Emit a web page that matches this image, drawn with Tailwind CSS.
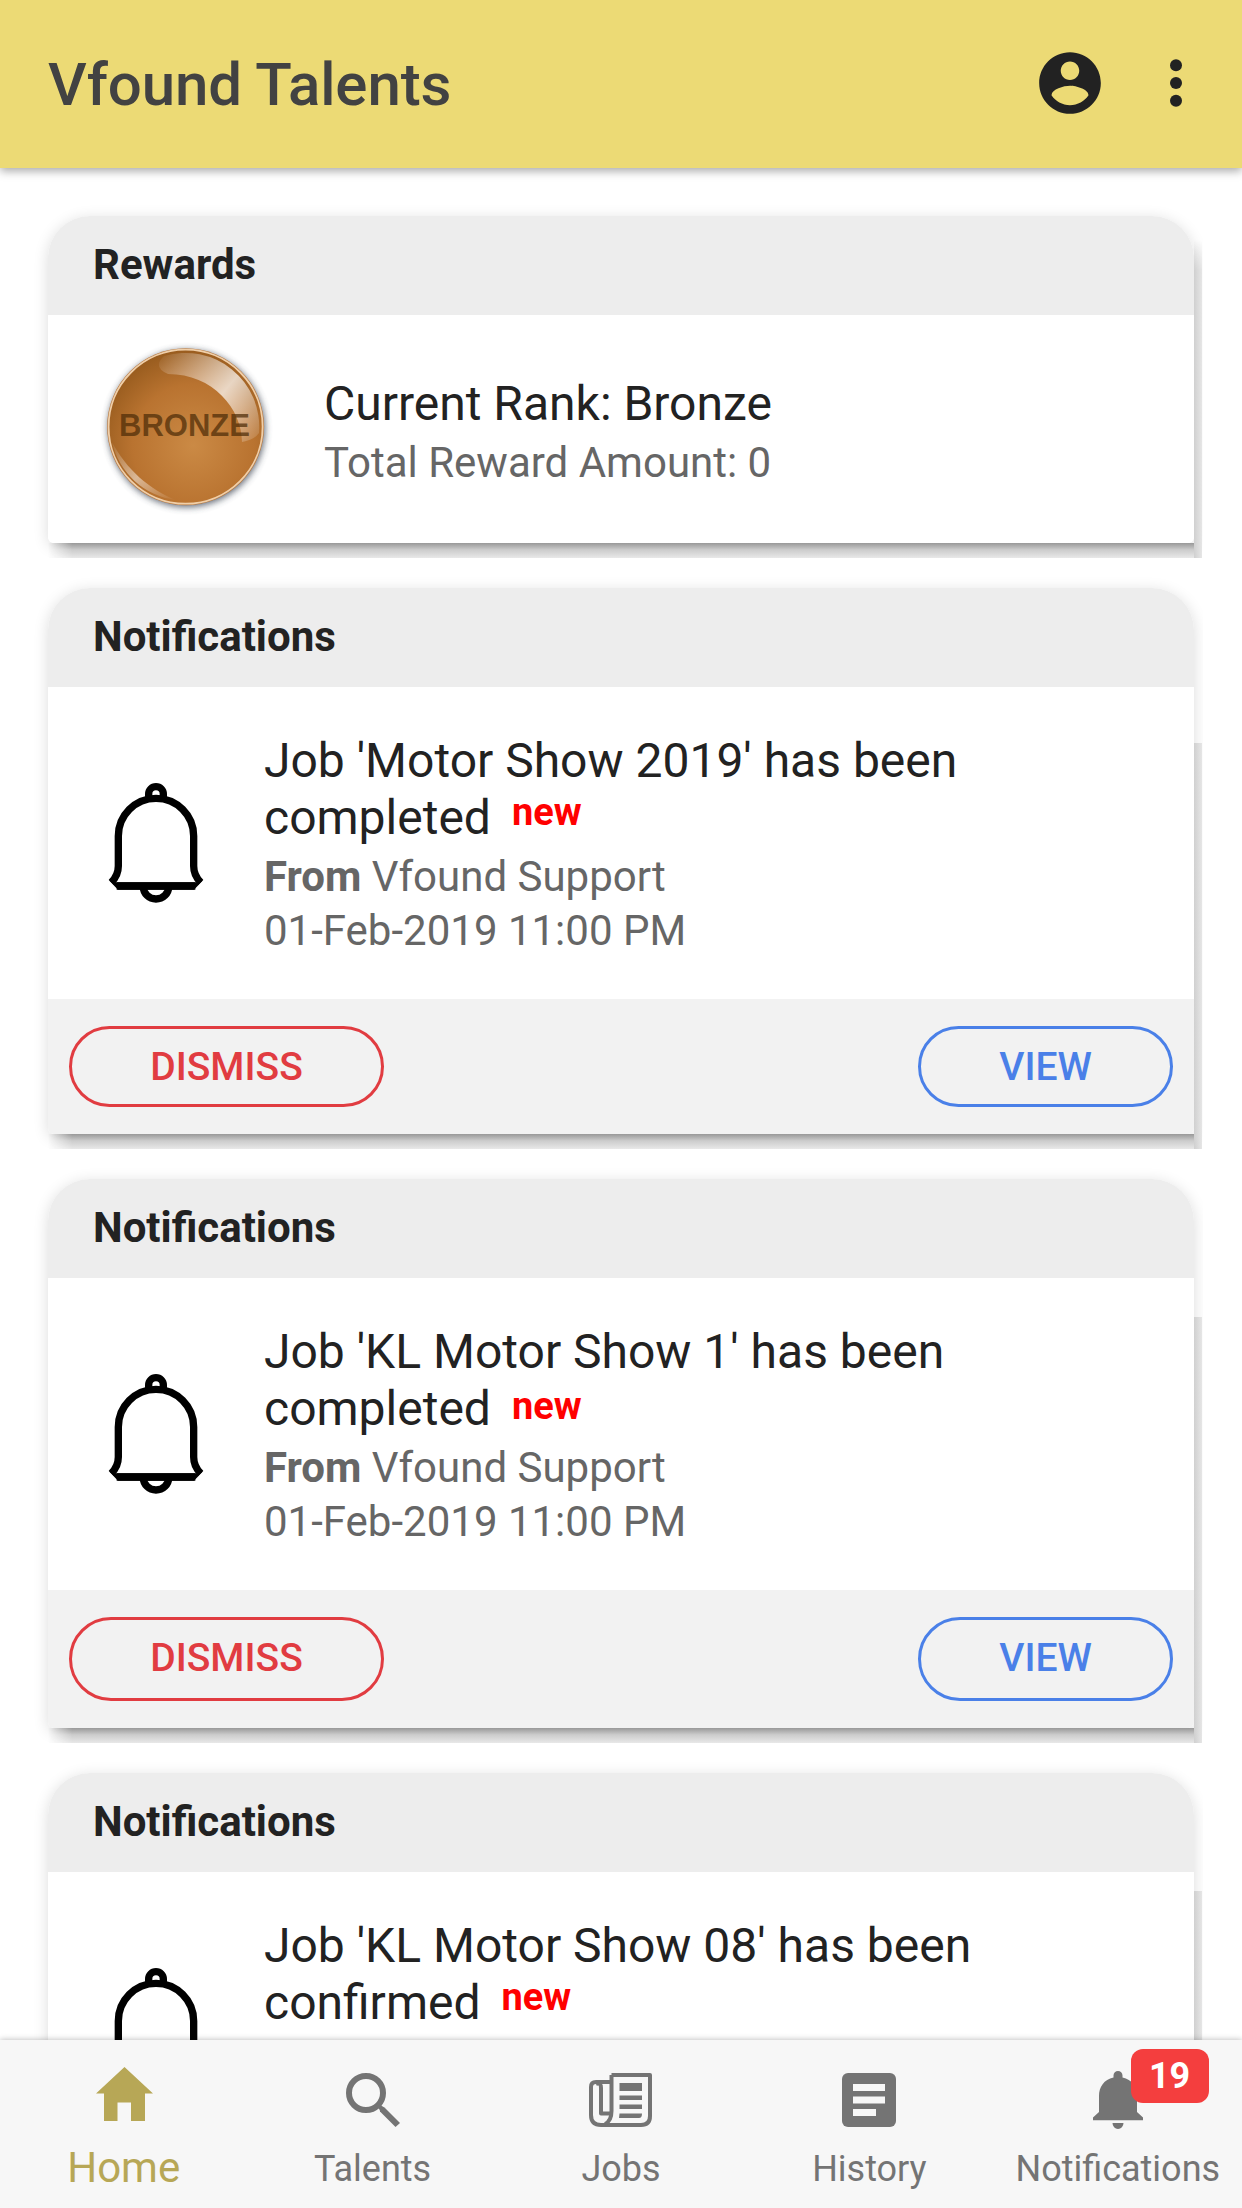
<!DOCTYPE html>
<html lang="en">
<head>
<meta charset="utf-8">
<title>Vfound Talents</title>
<script src="https://cdn.jsdelivr.net/npm/@tailwindcss/browser@4"></script>
</head>
<body class="bg-white">
<svg class="hidden">
  <symbol id="bell" viewBox="225 270 306 378">
    <g fill="none" stroke="#000" stroke-width="22">
      <path d="M356 326v-14a22 22 0 0 1 44 0v14"/>
      <path d="M265 580V438A113 113 0 0 1 491 438V580" stroke="none"/>
      <path d="M244 577Q265 556 265 528V438A113 113 0 0 1 491 438V528Q491 556 512 577"/>
      <path d="M260 588H496"/>
      <path d="M340 590a38 37 0 0 0 76 0"/>
    </g>
    <path d="M236 570L264 599H492L520 570L500 577H256Z"/>
  </symbol>
</svg>
<div class="relative flex h-[2208px] w-[1242px] flex-col overflow-hidden bg-white font-[Roboto,sans-serif] text-[#222]">
  <header class="z-10 flex h-[168px] shrink-0 items-center bg-[#ecda75] pl-12 shadow-[0_3px_9px_rgba(0,0,0,0.35)]">
    <h1 class="flex-1 pt-[2px] text-[60px] leading-[72px] font-medium tracking-[-0.1px] text-[#424242]">Vfound Talents</h1>
    <svg class="mr-[31px] mb-[3px] size-[74px]" viewBox="0 0 24 24" fill="#222"><path d="M12 2C6.48 2 2 6.48 2 12s4.48 10 10 10 10-4.480 10-10S17.520 2 12 2zm0 3c1.66 0 3 1.34 3 3s-1.340 3-3 3-3-1.340-3-3 1.340-3 3-3zm0 14.200c-2.500 0-4.710-1.280-6-3.220.030-1.990 4-3.080 6-3.080 1.990 0 5.970 1.090 6 3.080-1.290 1.940-3.500 3.220-6 3.220z"/></svg>
    <svg class="mr-[28px] mb-[3px] h-[72px] w-[76px]" viewBox="0 0 76 72" fill="#222"><circle cx="38" cy="18.300" r="6"/><circle cx="38" cy="36" r="6"/><circle cx="38" cy="53.700" r="6"/></svg>
  </header>

  <main class="flex flex-1 flex-col gap-[45px] px-12 pt-12">
    <section class="relative h-[327px] shrink-0 rounded-t-[42px] rounded-b-[6px] bg-white shadow-[0_3px_15px_rgba(0,0,0,0.14)] [clip-path:inset(-15px_-9px_-15px_-15px)]">
      <div class="absolute top-[24px] -bottom-[15px] left-full w-[8px] bg-linear-to-r from-[#d0d0d0] to-[#e6e6e6] [mask-image:linear-gradient(to_bottom,transparent,black_30px)]"></div>
      <div class="absolute top-full right-0 left-0 h-[15px] bg-linear-to-b from-[#999] via-[#cccccc] via-45% to-[#e8e8e8] [mask-image:linear-gradient(to_right,transparent,black_24px)]"></div>
      <h2 class="h-[99px] rounded-t-[42px] bg-[#ededed] pt-[24px] pl-[45px] text-[42px] leading-[50px] font-bold">Rewards</h2>
      <div class="relative flex h-[228px] rounded-b-[6px] bg-white pl-[48px]">
        <svg class="mt-[24px] h-[180px] w-[180px] shrink-0" viewBox="0 0 180 180">
          <defs>
            <radialGradient id="metal" cx=".55" cy=".62" r=".66"><stop offset="0" stop-color="#cb8a45"/><stop offset=".6" stop-color="#b97330"/><stop offset="1" stop-color="#94591c"/></radialGradient>
            <linearGradient id="shine" gradientUnits="userSpaceOnUse" x1="62" y1="22" x2="160" y2="104"><stop offset="0" stop-color="#fff" stop-opacity=".05"/><stop offset=".25" stop-color="#fff" stop-opacity=".35"/><stop offset=".55" stop-color="#fff" stop-opacity=".72"/><stop offset="1" stop-color="#fff" stop-opacity=".1"/></linearGradient>
            <linearGradient id="glow" x1="0" y1="0" x2="1" y2="1"><stop offset="0" stop-color="#fff" stop-opacity=".05"/><stop offset=".5" stop-color="#fff" stop-opacity=".5"/><stop offset="1" stop-color="#fff" stop-opacity="0"/></linearGradient>
            <filter id="soft" x="-20%" y="-20%" width="140%" height="140%"><feGaussianBlur stdDeviation="3.500"/></filter>
          </defs>
          <circle cx="90.500" cy="89.500" r="78.500" fill="#39404f" opacity=".8" filter="url(#soft)"/>
          <circle cx="89.600" cy="87.700" r="78.500" fill="#b97a41"/>
          <circle cx="89.600" cy="87.700" r="77" fill="url(#metal)" stroke="#f0cfa9" stroke-width="1.800"/>
          <path d="M68 17A74 74 0 0 1 163 94Q158 101 146 103C146 70 117 35 72 35Q56 28 68 17Z" fill="url(#shine)"/>
          <path d="M16 103A75 75 0 0 0 80 161C54 151 30 130 16 103Z" fill="url(#glow)"/>
          <text x="88.500" y="97" text-anchor="middle" textLength="131" lengthAdjust="spacingAndGlyphs" font-family="Liberation Sans, sans-serif" font-weight="700" font-size="31" fill="#4d2c08" fill-opacity=".72">BRONZE</text>
        </svg>
        <div class="pt-[60px] pl-[48px]">
          <p class="text-[48px] leading-[57px]">Current Rank: Bronze</p>
          <p class="mt-[4px] text-[42px] leading-[54px] text-[#666]">Total Reward Amount: 0</p>
        </div>
      </div>
    </section>

    <section class="relative h-[546px] shrink-0 rounded-t-[42px] rounded-b-[6px] bg-white shadow-[0_3px_15px_rgba(0,0,0,0.14)] [clip-path:inset(-15px_-9px_-15px_-15px)]">
      <div class="absolute top-[155px] -bottom-[15px] left-full w-[8px] bg-linear-to-r from-[#d0d0d0] to-[#e6e6e6]"></div>
      <div class="absolute top-full right-0 left-0 h-[15px] bg-linear-to-b from-[#999] via-[#cccccc] via-45% to-[#e8e8e8] [mask-image:linear-gradient(to_right,transparent,black_24px)]"></div>
      <h2 class="h-[99px] rounded-t-[42px] bg-[#ededed] pt-[24px] pl-[45px] text-[42px] leading-[50px] font-bold">Notifications</h2>
      <div class="flex h-[312px] bg-white pl-[57px]">
        <svg class="mt-[93px] h-[126px] w-[102px] shrink-0"><use href="#bell"/></svg>
        <div class="pt-[45px] pl-[57px]">
          <p class="text-[48px] leading-[57px]">Job 'Motor Show 2019' has been<br>completed<span class="relative -top-[9px] ml-[21px] text-[38px] leading-none font-bold text-[#f00]">new</span></p>
          <p class="mt-[4px] text-[42px] leading-[54px] text-[#666]"><b>From</b> Vfound Support<br>01-Feb-2019 11:00 PM</p>
        </div>
      </div>
      <div class="relative flex h-[135px] items-center justify-between rounded-b-[6px] bg-[#f2f2f2] px-[21px]">
        <button class="h-[81px] w-[315px] rounded-full border-3 border-[#e13c41] pt-[2px] text-[39px] font-medium text-[#e13c41]">DISMISS</button>
        <button class="h-[81px] w-[255px] rounded-full border-3 border-[#4a80e8] pt-[2px] text-[39px] font-medium text-[#4a80e8]">VIEW</button>
      </div>
    </section>

    <section class="relative h-[549px] shrink-0 rounded-t-[42px] rounded-b-[6px] bg-white shadow-[0_3px_15px_rgba(0,0,0,0.14)] [clip-path:inset(-15px_-9px_-15px_-15px)]">
      <div class="absolute top-[138px] -bottom-[15px] left-full w-[8px] bg-linear-to-r from-[#d0d0d0] to-[#e6e6e6]"></div>
      <div class="absolute top-full right-0 left-0 h-[15px] bg-linear-to-b from-[#999] via-[#cccccc] via-45% to-[#e8e8e8] [mask-image:linear-gradient(to_right,transparent,black_24px)]"></div>
      <h2 class="h-[99px] rounded-t-[42px] bg-[#ededed] pt-[24px] pl-[45px] text-[42px] leading-[50px] font-bold">Notifications</h2>
      <div class="flex h-[312px] bg-white pl-[57px]">
        <svg class="mt-[93px] h-[126px] w-[102px] shrink-0"><use href="#bell"/></svg>
        <div class="pt-[45px] pl-[57px]">
          <p class="text-[48px] leading-[57px]">Job 'KL Motor Show 1' has been<br>completed<span class="relative -top-[6px] ml-[21px] text-[38px] leading-none font-bold text-[#f00]">new</span></p>
          <p class="mt-[4px] text-[42px] leading-[54px] text-[#666]"><b>From</b> Vfound Support<br>01-Feb-2019 11:00 PM</p>
        </div>
      </div>
      <div class="relative flex h-[138px] items-center justify-between rounded-b-[6px] bg-[#f2f2f2] px-[21px]">
        <button class="h-[84px] w-[315px] rounded-full border-3 border-[#e13c41] pb-[1px] text-[39px] font-medium text-[#e13c41]">DISMISS</button>
        <button class="h-[84px] w-[255px] rounded-full border-3 border-[#4a80e8] pb-[1px] text-[39px] font-medium text-[#4a80e8]">VIEW</button>
      </div>
    </section>

    <section class="relative h-[546px] shrink-0 rounded-t-[42px] rounded-b-[6px] bg-white shadow-[0_3px_15px_rgba(0,0,0,0.14)] [clip-path:inset(-15px_-9px_-15px_-15px)]">
      <div class="absolute top-[118px] -bottom-[15px] left-full w-[8px] bg-linear-to-r from-[#d0d0d0] to-[#e6e6e6]"></div>
      <h2 class="h-[99px] rounded-t-[42px] bg-[#ededed] pt-[24px] pl-[45px] text-[42px] leading-[50px] font-bold">Notifications</h2>
      <div class="flex h-[312px] bg-white pl-[57px]">
        <svg class="mt-[93px] h-[126px] w-[102px] shrink-0"><use href="#bell"/></svg>
        <div class="pt-[45px] pl-[57px]">
          <p class="text-[48px] leading-[57px]">Job 'KL Motor Show 08' has been<br>confirmed<span class="relative -top-[9px] ml-[21px] text-[38px] leading-none font-bold text-[#f00]">new</span></p>
        </div>
      </div>
    </section>
  </main>

  <nav class="absolute inset-x-0 bottom-0 z-10 grid h-[168px] grid-cols-5 bg-[#f7f7f7] text-[36px] leading-[44px] text-[#747474] shadow-[0_0_6px_rgba(0,0,0,0.3)]">
    <a class="flex flex-col items-center text-[42px] text-[#b7a756]">
      <svg class="mt-[27px] h-[54px] w-[57px]" viewBox="0 0 57 54" fill="currentColor"><path d="M28.500 0 57 26.500H49V54H35V35.500H21.500V54H8V26.500H0Z"/></svg>
      <span class="mt-[25px] pr-px">Home</span>
    </a>
    <a class="flex flex-col items-center">
      <svg class="mt-[33px] h-[54px] w-[54px]" viewBox="0 0 54 54" fill="none" stroke="currentColor"><circle cx="20" cy="20" r="17" stroke-width="6"/><path d="M33.500 35.500Q35 32 38.500 34.500L54 50 49.500 54 34 38.500Z" fill="currentColor" stroke="none"/><path d="M31 31l5 5" stroke-width="4"/></svg>
      <span class="mt-[20px]">Talents</span>
    </a>
    <a class="flex flex-col items-center">
      <svg class="mt-[33px] h-[54px] w-[63px]" viewBox="0 0 63 54"><g fill="none" stroke="currentColor" stroke-width="4" stroke-linejoin="round"><path d="M22.500 2H61V43Q61 52 52 52H12Q2 52 2 42V14Q2 9 7 9H21"/><path d="M22.500 2V38Q22.500 48 16 51"/><path d="M7 11Q12 9 12 15V40.500H21" /></g><path d="M30.500 10h22.500v8H30.500zM30.500 22.500h22.500v4.500H30.500zM30.500 31.500h22.500v4.500H30.500zM30.500 40.500h22.500q0 4.500-3 4.500H30z" fill="currentColor"/></svg>
      <span class="mt-[20px]">Jobs</span>
    </a>
    <a class="flex flex-col items-center">
      <svg class="mt-[33px] h-[54px] w-[54px]" viewBox="0 0 54 54"><rect width="54" height="54" rx="6" fill="currentColor"/><path d="M11 11h32v7H11zM11 23.500h32v7H11zM11 36h23v7H11z" fill="#f7f7f7"/></svg>
      <span class="mt-[20px]">History</span>
    </a>
    <a class="relative flex flex-col items-center">
      <svg class="mt-[31px] h-[58px] w-[50px]" viewBox="0 0 50 58" fill="currentColor"><path d="M20.500 6.500V4.500a4.500 4.500 0 0 1 9 0V6.500C39 8.500 44 16 44 25V41L50 46.500V49.300H0V46.500L6 41V25C6 16 11 8.500 20.500 6.500ZM19.500 52h11a5.500 6 0 0 1-11 0Z"/></svg>
      <span class="mt-[18px]">Notifications</span>
      <span class="absolute top-[9px] left-[137px] h-[54px] w-[78px] rounded-[12px] bg-[#f43e3e] text-center text-[36px] leading-[55px] font-bold text-white">19</span>
    </a>
  </nav>
</div>
</body>
</html>
